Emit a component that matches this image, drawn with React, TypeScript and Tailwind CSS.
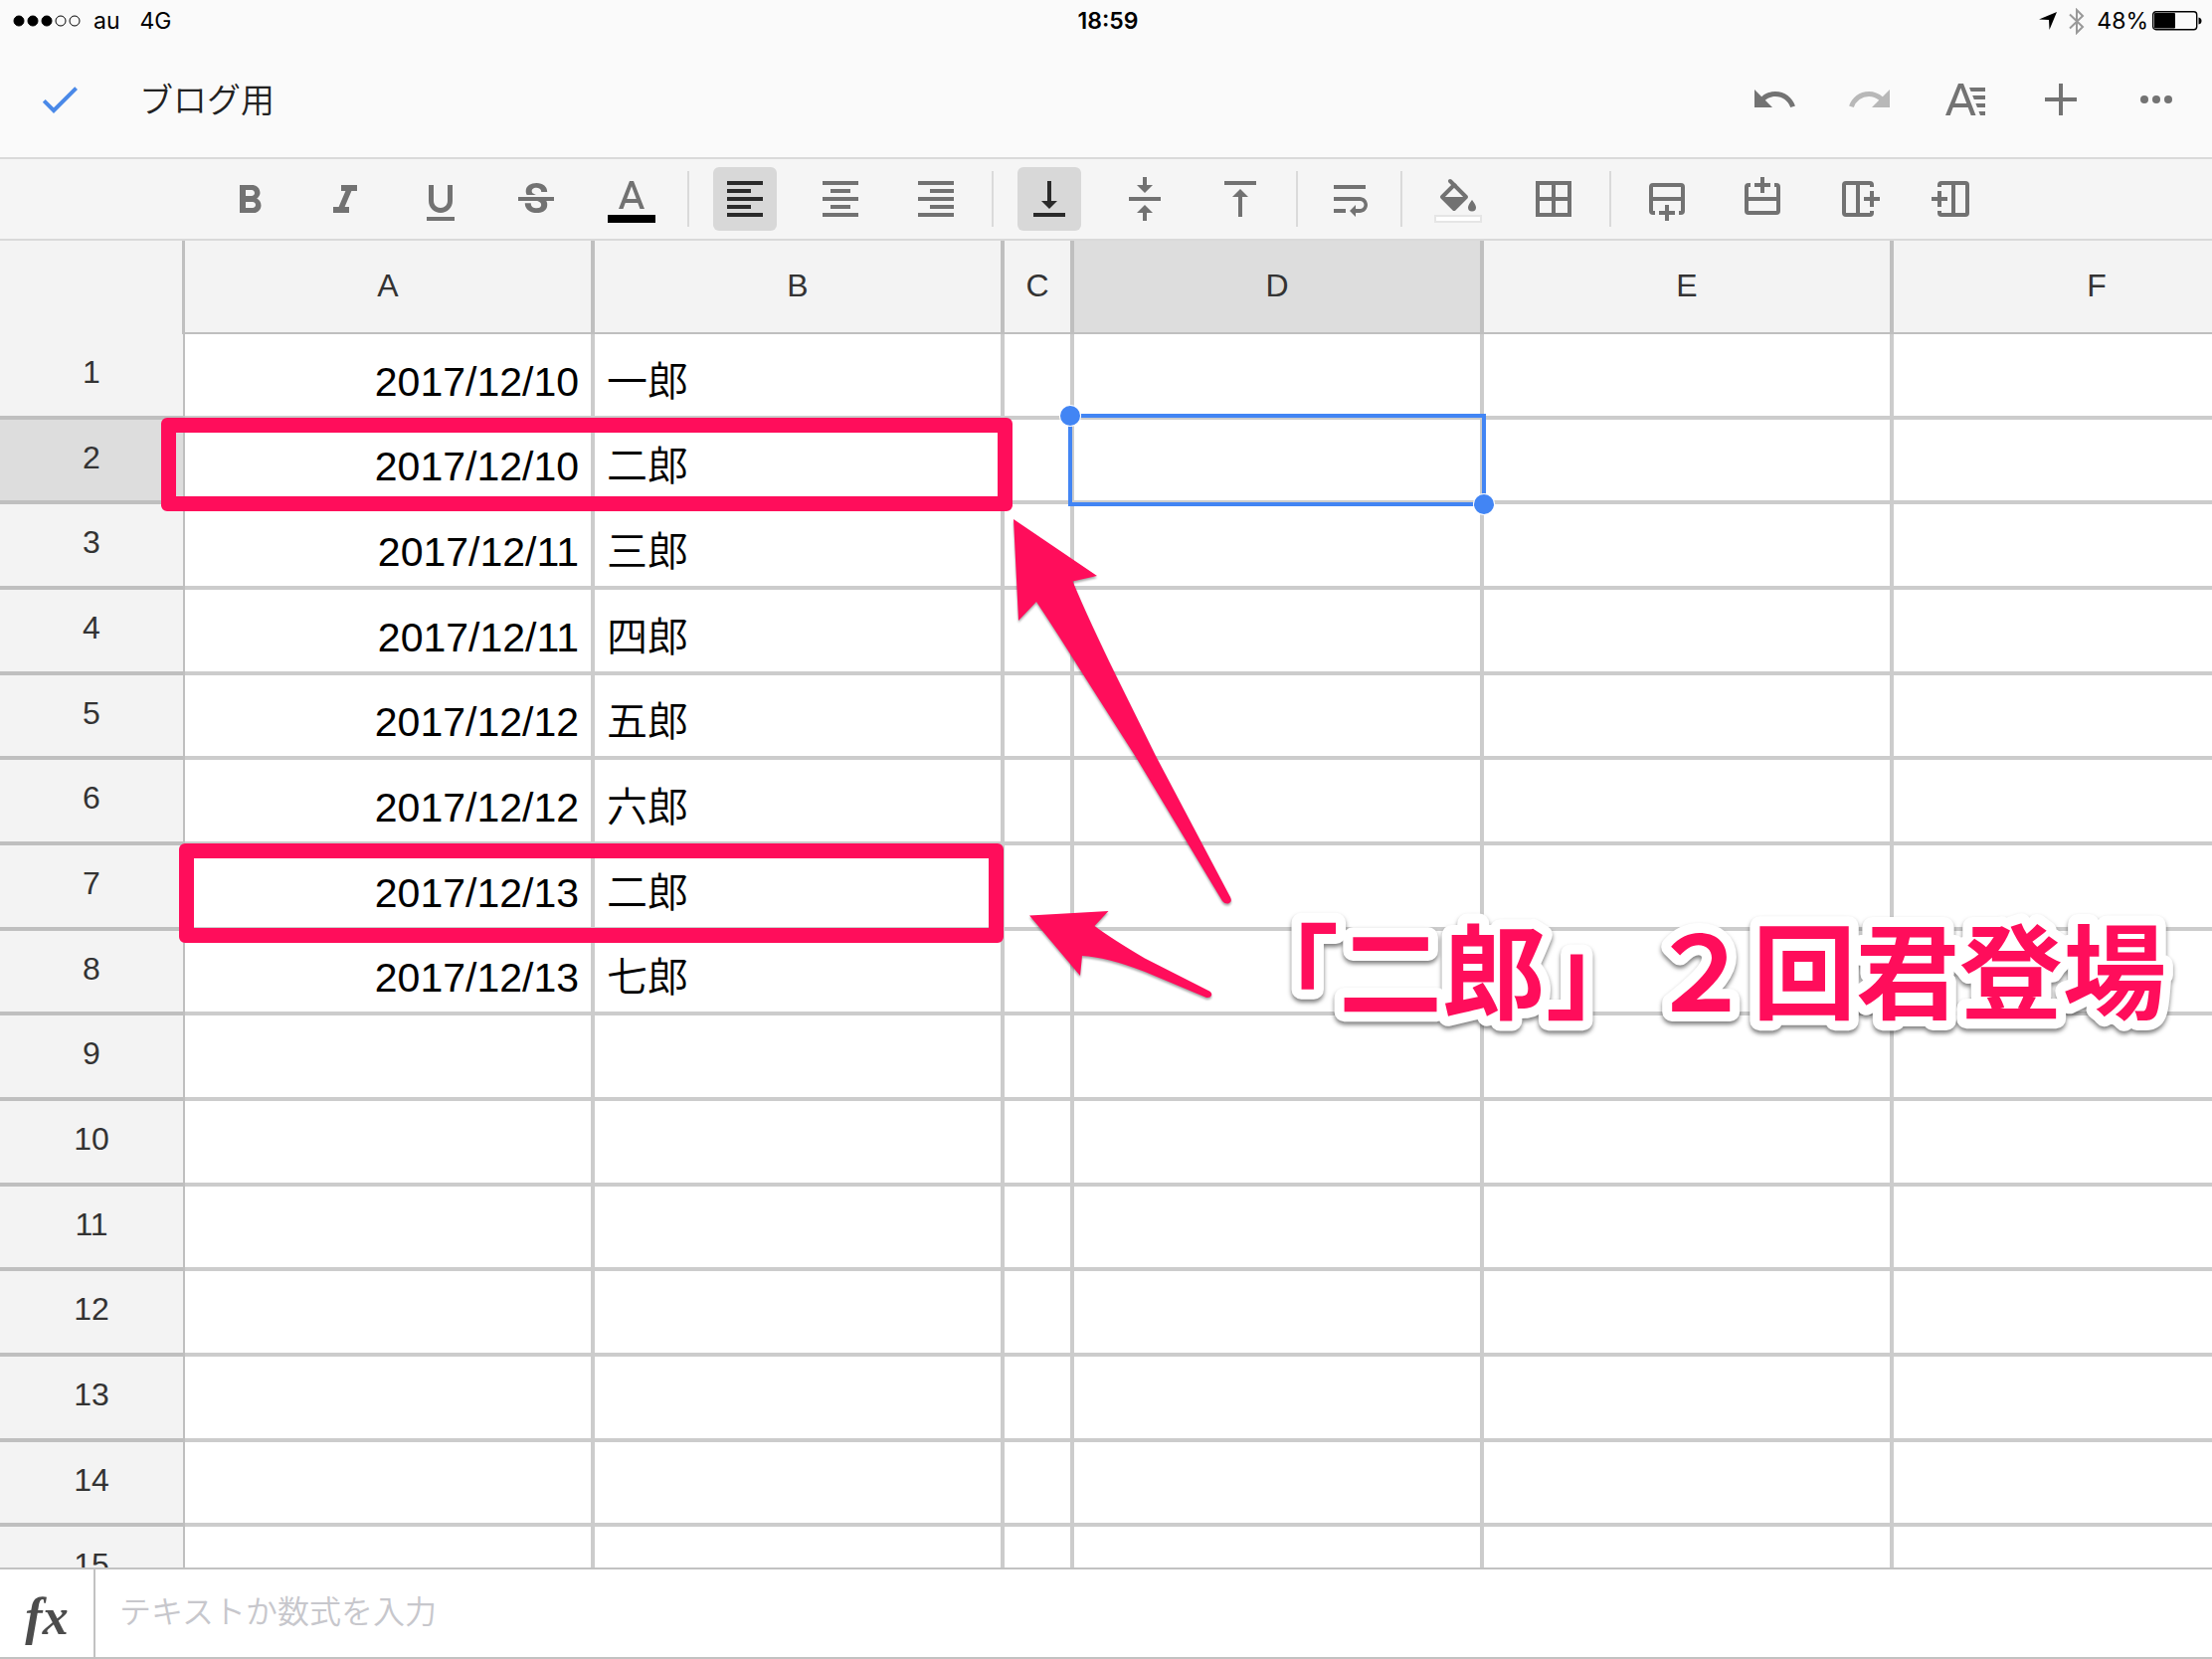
import { ReactNode } from "react";
import {
  MdCheck,
  MdFormatAlignCenter,
  MdFormatAlignLeft,
  MdFormatAlignRight,
  MdRedo,
  MdUndo,
  MdVerticalAlignBottom,
  MdVerticalAlignCenter,
  MdVerticalAlignTop,
  MdWrapText,
} from "react-icons/md";

const columns = ["A", "B", "C", "D", "E", "F"];

const data = [
  ["2017/12/10", "一郎"],
  ["2017/12/10", "二郎"],
  ["2017/12/11", "三郎"],
  ["2017/12/11", "四郎"],
  ["2017/12/12", "五郎"],
  ["2017/12/12", "六郎"],
  ["2017/12/13", "二郎"],
  ["2017/12/13", "七郎"],
];

const rows = Array.from({ length: 15 }, (_, i) => data[i] ?? ["", ""]);

const selected = { column: "D", row: 2 };

type IconProps = { children: ReactNode; viewBox?: string };

const Icon = ({ children, viewBox = "0 0 24 24" }: IconProps) => (
  <svg viewBox={viewBox} className="size-12 overflow-visible" fill="currentColor">
    {children}
  </svg>
);

const LineIcon = ({ children }: { children: ReactNode }) => (
  <svg viewBox="0 0 48 48" className="size-12" fill="none" stroke="currentColor" strokeWidth="4">
    {children}
  </svg>
);

type ToolProps = { label: string; active?: boolean; narrow?: boolean; children: ReactNode };

const Tool = ({ label, active, narrow, children }: ToolProps) => (
  <button
    aria-label={label}
    aria-pressed={active}
    className={`flex h-16 shrink-0 items-center justify-center rounded-md ${narrow ? "w-[55px]" : "w-16"} ${
      active ? "bg-[#d8d8d8] text-[#2a2a2a]" : "text-[#727272]"
    }`}
  >
    {children}
  </button>
);

const ToolGroup = ({ children }: { children: ReactNode }) => (
  <div className="flex items-center gap-8">{children}</div>
);

const Divider = () => <div className="mx-6 h-14 w-0.5 shrink-0 bg-[#dadada]" />;

const StatusBar = () => (
  <div className="grid h-10 grid-cols-3 items-center px-3 pt-0.5 text-[23px] leading-9 text-black">
    <div className="flex items-center">
      <svg width="70" height="12" viewBox="0 0 70 12" stroke="#000" strokeWidth="1">
        <circle cx="7" cy="6" r="5" />
        <circle cx="21" cy="6" r="5" />
        <circle cx="35" cy="6" r="5" />
        <circle cx="49" cy="6" r="5" fill="none" />
        <circle cx="63" cy="6" r="5" fill="none" />
      </svg>
      <span className="ml-3">au</span>
      <span className="ml-5">4G</span>
    </div>
    <div className="pl-1 text-center font-semibold">18:59</div>
    <div className="flex items-center justify-end">
      <svg width="18" height="18" viewBox="0 0 18 18">
        <path d="M18 0L10.500 18L10 8L0 7.500Z" />
      </svg>
      <svg width="16" height="27" viewBox="0 0 16 27" className="ml-3" fill="none" stroke="#999" strokeWidth="2">
        <path d="M1 6.500L14 19L8 25V2L14 8L1 20.500" />
      </svg>
      <span className="mr-1 ml-3">48%</span>
      <svg width="48" height="20" viewBox="0 0 48 20" className="overflow-visible">
        <rect x="0.700" y="0.700" width="44" height="18" rx="3" fill="none" stroke="#000" strokeWidth="1.400" />
        <rect x="2" y="2" width="21" height="15.500" rx="1" />
        <path d="M46.500 6.500Q49.500 7 49.500 10T46.500 13.500Z" />
      </svg>
    </div>
  </div>
);

const TitleBar = () => (
  <div className="flex h-[120px] items-center border-b-2 border-[#dadada] px-8 pt-0.5">
    <button aria-label="完了" className="ml-1 text-[#4a89e8]">
      <MdCheck className="size-12" />
    </button>
    <h1 className="ml-14 grow pt-0.5 text-[34px] leading-12 font-[350] text-[#222]">ブログ用</h1>
    <div className="flex gap-12 text-[#737373]">
      <button aria-label="元に戻す">
        <MdUndo className="size-12" />
      </button>
      <button aria-label="やり直し" className="text-[#b8b8b8]">
        <MdRedo className="size-12" />
      </button>
      <button aria-label="書式">
        <Icon viewBox="0 0 48 48">
          <path
            fillRule="evenodd"
            d="M17 8h5l12.500 32h-4.800l-3-8H11.700l-3 8H4zM19.400 12.500L13.500 28h11.800z"
          />
          <path d="M28 12h16v4H29.600zM31.200 20H44v4H32.800zM34.400 28H44v4h-8zM37.500 36H44v4h-5z" />
        </Icon>
      </button>
      <button aria-label="挿入">
        <LineIcon>
          <path d="M24 8v32M8 24h32" />
        </LineIcon>
      </button>
      <button aria-label="その他">
        <Icon viewBox="0 0 48 48">
          <circle cx="12" cy="24" r="4" />
          <circle cx="24" cy="24" r="4" />
          <circle cx="36" cy="24" r="4" />
        </Icon>
      </button>
    </div>
  </div>
);

const Toolbar = () => (
  <div className="flex h-[82px] items-center border-b-2 border-[#d9d9d9] bg-[#f5f5f5] pl-[219px]">
    <ToolGroup>
      <Tool label="太字">
        <Icon viewBox="0 -1 24 24">
          <path d="M15.600 10.790c.97-.67 1.650-1.770 1.650-2.790 0-2.260-1.750-4-4-4H7v14h7.040c2.090 0 3.710-1.700 3.710-3.790 0-1.520-.86-2.820-2.150-3.420zM10 6.500h3c.83 0 1.500.67 1.500 1.500s-.67 1.500-1.500 1.500h-3v-3zm3.500 9H10v-3h3.500c.83 0 1.500.67 1.500 1.500s-.67 1.500-1.500 1.500z" />
        </Icon>
      </Tool>
      <Tool label="斜体">
        <Icon viewBox="0 -1 24 24">
          <path d="M10 4v3h2.210l-3.420 8H6v3h8v-3h-2.210l3.420-8H18V4z" />
        </Icon>
      </Tool>
      <Tool label="下線">
        <Icon viewBox="0 -2 24 24">
          <path d="M12 17c3.310 0 6-2.690 6-6V3h-2.500v8c0 1.930-1.570 3.500-3.500 3.500S8.500 12.930 8.500 11V3H6v8c0 3.310 2.690 6 6 6zm-7 2v2h14v-2H5z" />
        </Icon>
      </Tool>
      <Tool label="取り消し線">
        <Icon viewBox="0 -1 24 24">
          <path d="M6.850 7.080C6.850 4.370 9.450 3 12.240 3c1.640 0 3 .49 3.900 1.280.77.65 1.460 1.730 1.460 3.240h-3.010c0-.31-.05-.59-.15-.85-.29-.86-1.200-1.280-2.250-1.280-1.860 0-2.340 1.020-2.340 1.700 0 .48.25.88.74 1.210.38.25.77.48 1.410.7H7.390c-.18-.32-.54-.91-.54-1.920zM21 12v-2H3v2h9.620c1.150.45 1.960.75 1.960 1.970 0 1-.81 1.670-2.280 1.670-1.540 0-2.930-.54-2.930-2.510H6.400c0 .55.08 1.130.24 1.580.81 2.290 3.290 3.300 5.670 3.300 2.270 0 5.300-.89 5.300-4.050 0-.3-.01-1.160-.48-1.940H21z" />
        </Icon>
      </Tool>
      <Tool label="テキストの色">
        <Icon>
          <path d="M11 3L5.500 17h2.250l1.120-3h6.250l1.120 3h2.250L13 3h-2zm-1.380 9L12 5.670 14.380 12H9.620z" />
          <path d="M0 20h24v4H0z" fill="#000" />
        </Icon>
      </Tool>
    </ToolGroup>
    <Divider />
    <ToolGroup>
      <Tool label="左揃え" active>
        <MdFormatAlignLeft className="size-12" />
      </Tool>
      <Tool label="中央揃え">
        <MdFormatAlignCenter className="size-12" />
      </Tool>
      <Tool label="右揃え">
        <MdFormatAlignRight className="size-12" />
      </Tool>
    </ToolGroup>
    <Divider />
    <ToolGroup>
      <Tool label="下揃え" active>
        <MdVerticalAlignBottom className="size-12" />
      </Tool>
      <Tool label="上下中央揃え">
        <MdVerticalAlignCenter className="size-12" />
      </Tool>
      <Tool label="上揃え">
        <MdVerticalAlignTop className="size-12" />
      </Tool>
    </ToolGroup>
    <Divider />
    <Tool label="折り返し" narrow>
      <MdWrapText className="size-12" />
    </Tool>
    <Divider />
    <ToolGroup>
      <Tool label="塗りつぶしの色">
        <LineIcon>
          <path d="M20 10L32 22L20 34L8 22Z" strokeLinejoin="round" />
          <path d="M16 6l5 5" strokeLinecap="round" />
          <path d="M8 22h24L20 34Z" fill="currentColor" stroke="none" />
          <path d="M38 25s-4 5-4 7.500a4 4 0 0 0 8 0c0-2.500-4-7.500-4-7.500z" fill="currentColor" stroke="none" />
          <rect x="1" y="41" width="46" height="6" fill="#fff" stroke="#e5e5e5" strokeWidth="2" />
        </LineIcon>
      </Tool>
      <Tool label="枠線">
        <LineIcon>
          <path d="M8 8h32v32H8zM24 8v32M8 24h32" />
        </LineIcon>
      </Tool>
    </ToolGroup>
    <Divider />
    <ToolGroup>
      <Tool label="下に行を挿入">
        <LineIcon>
          <path d="M12 38h-2q-2 0-2-2V12q0-2 2-2h28q2 0 2 2v24q0 2-2 2h-2M8 24h32M24 30v16M16 38h16" />
        </LineIcon>
      </Tool>
      <Tool label="上に行を挿入">
        <LineIcon>
          <path d="M12 10h-2q-2 0-2 2v24q0 2 2 2h28q2 0 2-2V12q0-2-2-2h-2M8 24h32M24 2v16M16 10h16" />
        </LineIcon>
      </Tool>
      <Tool label="右に列を挿入">
        <LineIcon>
          <path d="M38 12v-2q0-2-2-2H12q-2 0-2 2v28q0 2 2 2h24q2 0 2-2v-2M24 8v32M38 16v16M30 24h16" />
        </LineIcon>
      </Tool>
      <Tool label="左に列を挿入">
        <LineIcon>
          <path d="M10 12v-2q0-2 2-2h24q2 0 2 2v28q0 2-2 2H12q-2 0-2-2v-2M24 8v32M10 16v16M2 24h16" />
        </LineIcon>
      </Tool>
    </ToolGroup>
  </div>
);

const Selection = () => (
  <div className="absolute -inset-1.5 z-10 border-4 border-[#4285f4]">
    <span className="absolute -top-3 -left-3 size-5 rounded-full bg-[#4285f4] ring-1 ring-white" />
    <span className="absolute -right-3 -bottom-3 size-5 rounded-full bg-[#4285f4] ring-1 ring-white" />
  </div>
);

const Sheet = () => (
  <table className="w-[2316px] table-fixed border-separate border-spacing-0">
    <colgroup>
      <col className="w-[186px]" />
      <col className="w-[412px]" />
      <col className="w-[412px]" />
      <col className="w-[70px]" />
      <col className="w-[412px]" />
      <col className="w-[412px]" />
      <col className="w-[412px]" />
    </colgroup>
    <thead>
      <tr className="h-[94px] text-[32px] leading-10 text-[#333]">
        <td className="border-r-[3px] border-[#bfbfbf] bg-[#f3f3f3] p-0" />
        {columns.map((name) => (
          <th
            key={name}
            className={`border-r-4 border-b-2 border-[#bfbfbf] p-0 pb-0.5 font-normal ${
              name === selected.column ? "bg-[#ddd]" : "bg-[#f3f3f3]"
            }`}
          >
            {name}
          </th>
        ))}
      </tr>
    </thead>
    <tbody>
      {rows.map(([date, name], i) => (
        <tr key={i} className={i % 3 === 1 ? "h-[85px]" : "h-[86px]"}>
          <th
            className={`border-r-2 border-b-4 border-[#bfbfbf] p-0 pb-1.5 text-[32px] leading-10 font-normal text-[#333] ${
              i + 1 === selected.row ? "bg-[#ddd]" : "bg-[#f3f3f3]"
            }`}
          >
            {i + 1}
          </th>
          {columns.map((column) => (
            <td
              key={column}
              className={`relative border-r-4 border-b-4 border-[#ccc] px-3 pt-0 pb-2.5 align-bottom text-[41px] leading-12 text-black ${
                column === "A" ? "text-right" : "font-[350]"
              }`}
            >
              {column === "A" && date}
              {column === "B" && name}
              {column === selected.column && i + 1 === selected.row && <Selection />}
            </td>
          ))}
        </tr>
      ))}
    </tbody>
  </table>
);

// hand-drawn notes on top of the sheet
const Annotations = () => (
  <div className="pointer-events-none absolute top-0 left-0 h-[860px] w-[2224px]">
    <div className="absolute top-[178px] left-[162px] h-[94px] w-[856px] rounded-md border-15 border-[#ff0d5b]" />
    <div className="absolute top-[606px] left-[180px] h-[100px] w-[829px] rounded-md border-15 border-[#ff0d5b]" />
    <svg
      viewBox="1000 500 1224 560"
      className="absolute top-[258px] left-[1000px] h-[560px] w-[1224px]"
      fill="#ff0d5b"
    >
      <g className="drop-shadow-[0_2px_1px_rgba(0,0,0,0.35)]">
        <path d="M1019 522L1103 579L1078.500 584.500C1090 612 1105 644 1121 677L1162 760L1237 902Q1239.500 907 1235 908.500Q1231.500 909 1229 906L1142.500 762L1087 675Q1062 635 1042 605L1024 624Z" />
        <path d="M1035 920.500L1114.500 916L1100.500 931Q1118 944 1151 963.500L1216 996.500Q1219 998.500 1218 1001Q1217 1003.500 1213 1003L1151 977Q1112 962 1088 961L1086 981Z" />
      </g>
      <text
        x="1242"
        y="1017"
        stroke="#fff"
        strokeWidth="20"
        strokeLinejoin="round"
        className="text-[104px] font-bold drop-shadow-[0_3px_2px_rgba(0,0,0,0.5)] [paint-order:stroke]"
      >
        「二郎」２回君登場
      </text>
    </svg>
  </div>
);

const FormulaBar = () => (
  <div className="flex h-[92px] shrink-0 border-y-2 border-[#c2c2c2] bg-white">
    <label
      htmlFor="formula"
      className="flex w-24 items-center justify-center border-r-2 border-[#c2c2c2] pt-2 font-['Liberation_Serif',serif] text-[52px] leading-12 font-bold text-[#4c4c4c] italic"
    >
      fx
    </label>
    <input
      id="formula"
      type="text"
      placeholder="テキストか数式を入力"
      className="grow px-6 pb-0.5 text-[32px] font-[350] outline-none placeholder:text-[#c7c7cc]"
    />
  </div>
);

const App = () => {
  return (
    <main className="flex h-screen w-full flex-col overflow-hidden bg-white font-['Liberation_Sans','Noto_Sans_CJK_JP',sans-serif]">
      <header className="shrink-0 bg-[#fafafa]">
        <div className="font-['Inter',sans-serif]">
          <StatusBar />
        </div>
        <TitleBar />
        <Toolbar />
      </header>
      <section className="relative min-h-0 grow overflow-hidden">
        <Sheet />
        <Annotations />
      </section>
      <FormulaBar />
    </main>
  );
};

export default App;
